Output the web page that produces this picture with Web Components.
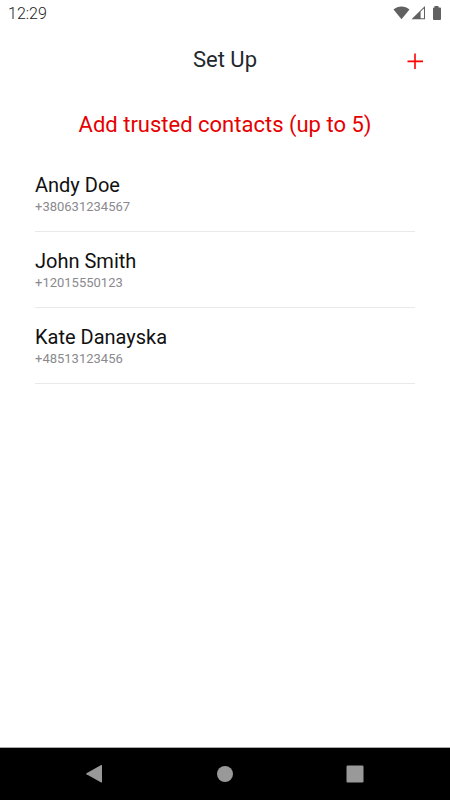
<!DOCTYPE html>
<html lang="en">
<head>
<meta charset="utf-8">
<meta name="viewport" content="width=device-width, initial-scale=1">
<title>Set Up</title>
<style>
  body {
    margin: 0;
    background: #fff;
    font-family: Roboto, "Noto Sans", sans-serif;
    color: #000;
  }
</style>
</head>
<body>
<setup-screen></setup-screen>

<script>
class StatusBar extends HTMLElement {
  constructor() {
    super();
    this.attachShadow({ mode: 'open' });
    this.render();
  }

  render() {
    this.shadowRoot.innerHTML = `
      <style>
        :host {
          display: flex;
          align-items: center;
          justify-content: space-between;
          height: 28px;
          padding: 0 8px;
          font-size: 16px;
          font-weight: 300;
          line-height: 28px;
          color: #222;
        }

        .icons {
          display: flex;
        }
      </style>
      <slot></slot>
      <div class="icons">
        <svg width="49" height="16" viewBox="0 0 49 16" fill="#616161" aria-hidden="true">
          <path d="M0.5 3.6C5 -0.4 12 -0.4 16.5 3.6L8.5 13.3Z"/>
          <path d="M18.5 13.2L32 0V13.2ZM27.6 5.6V12.3H31V2.4Z" fill-rule="evenodd"/>
          <path d="M41.5 0H45.5V1.4H47Q48 1.4 48 2.4V13Q48 14 47 14H41Q40 14 40 13V2.4Q40 1.4 41 1.4H41.5Z"/>
        </svg>
      </div>
    `;
  }
}

class AppHeader extends HTMLElement {
  constructor() {
    super();
    this.attachShadow({ mode: 'open' });
    this.render();
  }

  render() {
    this.shadowRoot.innerHTML = `
      <style>
        :host {
          display: grid;
          grid-template-columns: 48px 1fr 48px;
          align-items: center;
          height: 64px;
          padding: 0 11px;
        }

        h1 {
          grid-column: 2;
          margin: 0;
          font-size: 22px;
          font-weight: 400;
          line-height: 28px;
          text-align: center;
          color: #22282e;
        }

        button {
          display: flex;
          align-items: center;
          justify-content: center;
          width: 48px;
          height: 48px;
          padding: 0;
          border: 0;
          background: none;
          color: #f00;
          cursor: pointer;
        }
      </style>
      <h1><slot></slot></h1>
      <button type="button" aria-label="Add contact">
        <svg width="16" height="18" viewBox="0 0 16 18" fill="none" stroke="currentColor" stroke-width="1.6" aria-hidden="true">
          <path d="M8 2.5V18M0.5 10.4H16"/>
        </svg>
      </button>
    `;
  }
}

class ContactItem extends HTMLElement {
  constructor() {
    super();
    this.attachShadow({ mode: 'open' });
    this.render();
  }

  render() {
    this.shadowRoot.innerHTML = `
      <style>
        :host {
          display: block;
          padding: 16px 0 15px;
          border-bottom: 1px solid #e9e9e9;
        }

        .name {
          font-size: 20px;
          line-height: 26px;
          color: #111;
        }

        .phone {
          font-size: 13px;
          line-height: 18px;
          color: #8a8a8e;
        }
      </style>
      <div class="name"><slot name="name"></slot></div>
      <div class="phone"><slot name="phone"></slot></div>
    `;
  }
}

class NavigationBar extends HTMLElement {
  constructor() {
    super();
    this.attachShadow({ mode: 'open' });
    this.render();
  }

  render() {
    this.shadowRoot.innerHTML = `
      <style>
        :host {
          display: flex;
          justify-content: center;
          gap: 82px;
          padding: 2px 0;
          background: #000;
          border-top: 1px solid #aaa;
        }

        button {
          display: flex;
          align-items: center;
          justify-content: center;
          width: 48px;
          height: 48px;
          padding: 0;
          border: 0;
          background: none;
          color: #999;
          cursor: pointer;
        }
      </style>
      <button type="button" aria-label="Back">
        <svg width="20" height="20" viewBox="0 0 20 20" fill="currentColor" aria-hidden="true">
          <path d="M1.5 9.2L16.2 1Q17 0.6 17 1.5V18Q17 18.9 16.2 18.5L1.5 10.3Q0.7 9.8 1.5 9.2Z"/>
        </svg>
      </button>
      <button type="button" aria-label="Home">
        <svg width="18" height="18" viewBox="0 0 18 18" fill="currentColor" aria-hidden="true">
          <circle cx="9" cy="9" r="8"/>
        </svg>
      </button>
      <button type="button" aria-label="Recent apps">
        <svg width="18" height="18" viewBox="0 0 18 18" fill="currentColor" aria-hidden="true">
          <rect x="0.5" y="0.5" width="17" height="17" rx="1.2"/>
        </svg>
      </button>
    `;
  }
}

class SetupScreen extends HTMLElement {
  constructor() {
    super();
    this.attachShadow({ mode: 'open' });
    this.contacts = [
      { name: 'Andy Doe', phone: '+380631234567' },
      { name: 'John Smith', phone: '+12015550123' },
      { name: 'Kate Danayska', phone: '+48513123456' }
    ];
    this.render();
  }

  render() {
    this.shadowRoot.innerHTML = `
      <style>
        :host {
          display: flex;
          flex-direction: column;
          min-height: 100vh;
        }

        main {
          flex: 1;
          padding: 0 35px;
        }

        h2 {
          margin: 0;
          padding: 19px 0 17px;
          font-size: 22px;
          font-weight: 400;
          line-height: 28px;
          text-align: center;
          color: #e60000;
        }
      </style>
      <status-bar>12:29</status-bar>
      <app-header>Set Up</app-header>
      <main>
        <h2>Add trusted contacts (up to 5)</h2>
        ${this.contacts.map(contact => `
          <contact-item>
            <span slot="name">${contact.name}</span>
            <span slot="phone">${contact.phone}</span>
          </contact-item>
        `).join('')}
      </main>
      <navigation-bar></navigation-bar>
    `;
  }
}

customElements.define('status-bar', StatusBar);
customElements.define('app-header', AppHeader);
customElements.define('contact-item', ContactItem);
customElements.define('navigation-bar', NavigationBar);
customElements.define('setup-screen', SetupScreen);
</script>
</body>
</html>
